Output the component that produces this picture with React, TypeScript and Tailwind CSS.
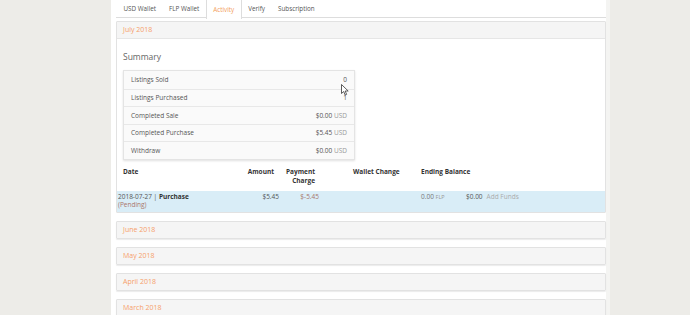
import React from 'react';

const summary = [
  { label: 'Listings Sold', value: '0', unit: '' },
  { label: 'Listings Purchased', value: '1', unit: '' },
  { label: 'Completed Sale', value: '$0.00', unit: 'USD' },
  { label: 'Completed Purchase', value: '$5.45', unit: 'USD' },
  { label: 'Withdraw', value: '$0.00', unit: 'USD' },
];

const tabs = ['USD Wallet', 'FLP Wallet', 'Activity', 'Verify', 'Subscription'];

const months = ['June 2018', 'May 2018', 'April 2018', 'March 2018'];

const PanelHeader: React.FC<{ title: string }> = ({ title }) => (
  <div className="h-[16px] flex items-center px-[6px] bg-[#f5f5f5] text-[7px] text-[#f5a06a]">
    {title}
  </div>
);

export default function App() {
  return (
    <div className="w-[690px] h-[315px] bg-[#edece8] overflow-hidden font-['Open_Sans',sans-serif] text-[#555]">
      <div className="relative ml-[111px] w-[499px] h-full bg-white border-r-[4px] border-[#f4f4f2] pl-[5px]">
        {/* tabs */}
        <div className="flex h-[18px] border-b border-[#ddd] pl-[1px] text-[6.3px] text-[#555]">
          {tabs.map((t) => (
            <div
              key={t}
              className={`px-[6.5px] flex items-center ${
                t === 'Activity'
                  ? 'text-[#f39c5a] border-x border-[#ddd] bg-white h-[19px] -mb-px'
                  : ''
              }`}
            >
              {t}
            </div>
          ))}
        </div>

        {/* July panel */}
        <div className="mt-[3px] border border-[#e2e2e2] rounded-[1px]">
          <PanelHeader title="July 2018" />
          <div className="border-t border-[#e6e6e6]">
            <div className="px-[6px] pt-[12px]">
              <div className="text-[8.5px] text-[#666] leading-[12px]">Summary</div>
              <div className="mt-[7px] w-[232px] border border-[#e4e4e4] shadow-[0_1px_2px_rgba(0,0,0,0.12)] text-[6.5px]">
                {summary.map((r, i) => (
                  <div
                    key={r.label}
                    className={`h-[17.6px] flex items-center justify-between px-[7px] bg-[#fafafa] ${
                      i > 0 ? 'border-t border-[#e8e8e8]' : ''
                    }`}
                  >
                    <span className="text-[#555]">{r.label}</span>
                    <span className="text-[#555]">
                      {r.value}
                      {r.unit && <span className="text-[#999]"> {r.unit}</span>}
                    </span>
                  </div>
                ))}
              </div>
            </div>

            {/* activity table header */}
            <div className="flex mt-[5px] h-[24px] text-[6.5px] font-bold text-[#333] leading-[9px]">
              <div className="w-[114px] pl-[6px] pt-[2px]">Date</div>
              <div className="w-[43px] text-right pt-[2px]">Amount</div>
              <div className="w-[41px] text-right pt-[2px]">
                Payment
                <br />
                Charge
              </div>
              <div className="w-[38px]" />
              <div className="w-[68px] pt-[2px]">Wallet Change</div>
              <div className="pt-[2px]">Ending Balance</div>
            </div>

            {/* data row */}
            <div className="flex mt-[2px] h-[21px] bg-[#d9edf7] text-[6.5px] leading-[8.5px] pt-[2px]">
              <div className="w-[114px] pl-[1px] text-[#555]">
                <div>
                  2018-07-27 | <span className="font-bold text-[#333]">Purchase</span>
                </div>
                <div className="text-[#a9756a]">(Pending)</div>
              </div>
              <div className="w-[48px] text-right text-[#555]">$5.45</div>
              <div className="w-[40px] text-right text-[#a9756a]">$-5.45</div>
              <div className="w-[102px]" />
              <div className="w-[45px] text-[#777]">
                0.00 <span className="text-[#999] text-[5.5px]">FLP</span>
              </div>
              <div className="text-[#555]">$0.00</div>
              <div className="ml-[4px] text-[#aaa]">Add Funds</div>
            </div>
          </div>
        </div>

        {/* collapsed months */}
        {months.map((m) => (
          <div
            key={m}
            className="mt-[8px] border border-[#e2e2e2] shadow-[0_1px_1px_rgba(0,0,0,0.08)] rounded-[1px]"
          >
            <PanelHeader title={m} />
          </div>
        ))}

        {/* mouse cursor */}
        <svg
          className="absolute left-[230px] top-[84px]"
          width="8"
          height="12"
          viewBox="0 0 8 12"
        >
          <path
            d="M0.5 0.5 L0.5 9.5 L2.7 7.5 L4.2 11 L5.6 10.4 L4.2 7 L7.2 7 Z"
            fill="#fff"
            stroke="#333"
            strokeWidth="0.8"
            strokeLinejoin="round"
          />
        </svg>
      </div>
    </div>
  );
}
